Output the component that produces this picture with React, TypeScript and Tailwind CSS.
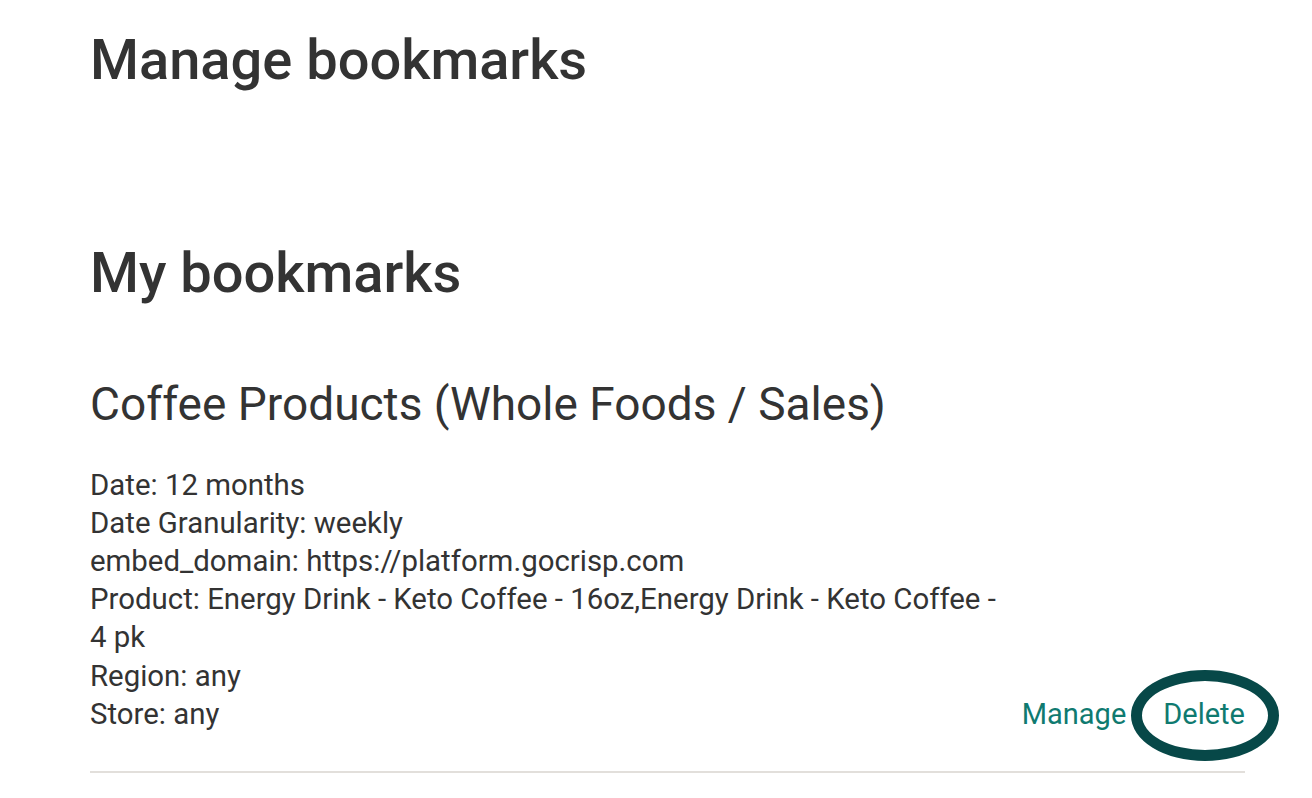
const details = [
  "Date: 12 months",
  "Date Granularity: weekly",
  "embed_domain: https://platform.gocrisp.com",
  "Product: Energy Drink - Keto Coffee - 16oz,Energy Drink - Keto Coffee - 4 pk",
  "Region: any",
  "Store: any",
];

export default function App() {
  return (
    <div
      className="min-h-[798px] bg-white text-[#333333]"
      style={{ fontFamily: "Roboto, 'Liberation Sans', sans-serif" }}
    >
      <div className="ml-[90px] w-[1155px] pt-[27px]">
        <h1 className="text-[56px] font-medium leading-[1.2]">Manage bookmarks</h1>

        <h2 className="mt-[146px] text-[56px] font-medium leading-[1.2]">My bookmarks</h2>

        {/* bookmark card */}
        <div className="mt-[70px] border-b-2 border-[#e2dfdb] pb-[38px]">
          <h3 className="text-[46px] font-normal leading-[1.2]">
            Coffee Products (Whole Foods / Sales)
          </h3>

          <div className="mt-[33px] flex items-end justify-between">
            <div className="w-[920px] text-[29.4px] leading-[38.2px]">
              {details.map((line) => (
                <div key={line}>{line}</div>
              ))}
            </div>

            <div className="flex items-center text-[29px] leading-[38px] text-[#0f7a70]">
              <a href="#" className="mr-[37px]">
                Manage
              </a>
              <a href="#" className="relative">
                Delete
                <span className="pointer-events-none absolute -left-[32px] -right-[34px] -top-[25px] -bottom-[28px] rounded-[50%] border-[11px] border-[#074848]" />
              </a>
            </div>
          </div>
        </div>
      </div>
    </div>
  );
}
